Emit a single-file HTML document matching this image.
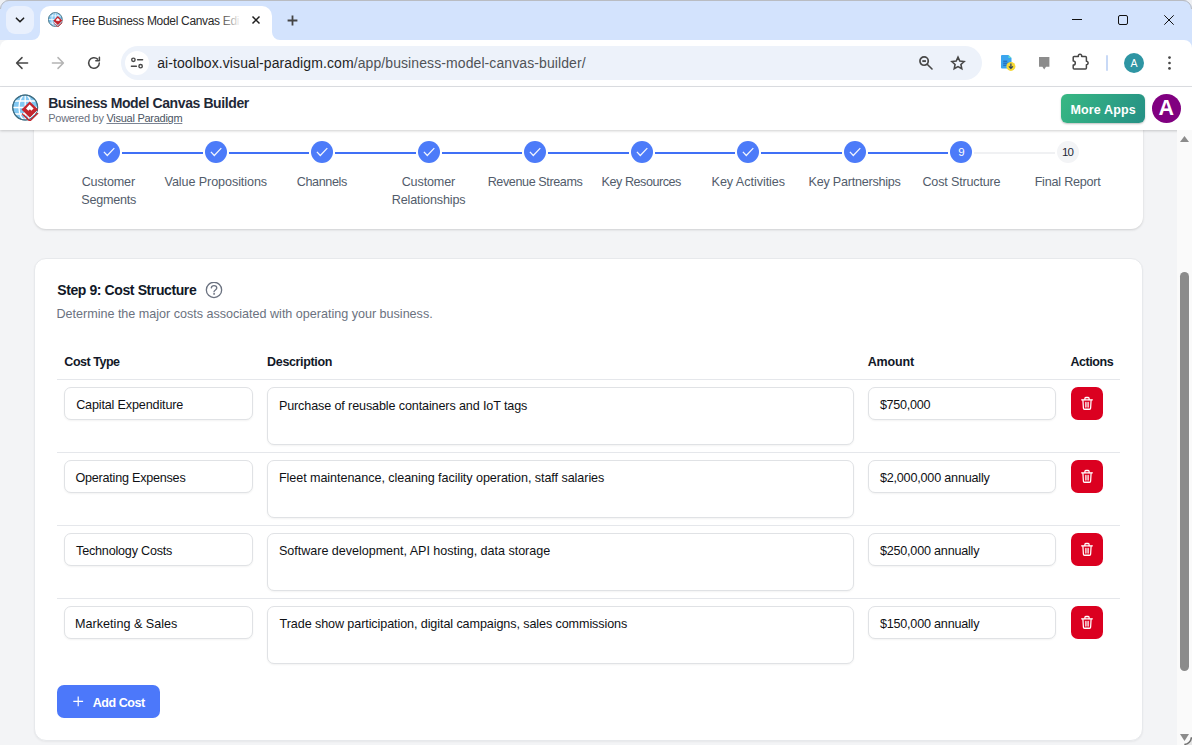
<!DOCTYPE html>
<html lang="en">
<head>
<meta charset="utf-8">
<title>Free Business Model Canvas Editor</title>
<style>
*{box-sizing:border-box;margin:0;padding:0}
html,body{width:1192px;height:745px;overflow:hidden;background:#f3f4f6}
body{font-family:"Liberation Sans",sans-serif;color:#1f2937;position:relative}
.abs{position:absolute}
.t{position:absolute;white-space:nowrap;line-height:1}
/* ---------- browser chrome ---------- */
#tabstrip{left:0;top:0;width:1192px;height:40px;background:#d3e3fd}
#tabdd{left:6px;top:6px;width:28px;height:28px;border-radius:9px;background:#e9f0fd}
#tab{left:40px;top:6px;width:232px;height:34px;background:#fff;border-radius:10px 10px 0 0}
#toolbar{left:0;top:40px;width:1192px;height:46px;background:#fff;border-radius:8px 0 0 0}
#tbline{left:0;top:86px;width:1192px;height:1px;background:#dfe1e5}
#omni{left:121px;top:46px;width:861px;height:34px;border-radius:17px;background:#edf2fa}
#omnichip{left:125px;top:51px;width:24px;height:24px;border-radius:12px;background:#fff}
/* ---------- app ---------- */
#apphead{left:0;top:87px;width:1192px;height:43px;background:#fff;box-shadow:0 1px 3px rgba(0,0,0,.12),0 1px 2px rgba(0,0,0,.08)}
#scroll{left:1177px;top:130px;width:15px;height:615px;background:#fafafa}
.card{background:#fff;border:1px solid #eceef1;box-shadow:0 1px 3px rgba(0,0,0,.07),0 1px 2px rgba(0,0,0,.04)}
#card1{left:34px;top:118px;width:1109px;height:111px;border-radius:12px;border:none;box-shadow:0 1px 3px rgba(0,0,0,.10),0 1px 2px rgba(0,0,0,.06)}
#card2{left:34px;top:258px;width:1109px;height:483px;border-radius:12px;border:1px solid #e7e9ec;box-shadow:0 1px 2px rgba(0,0,0,.05)}
.sc{position:absolute;width:22px;height:22px;border-radius:11px;background:#4c7bf9;top:141px}
.sl{position:absolute;height:2px;background:#4070f6;top:152px;width:80.5px}
.lab{font-size:12.6px;color:#525c6b}
.stn{width:22px;text-align:center;font-size:11.5px;top:146.5px}
.hl{position:absolute;left:57px;width:1063px;height:1px;background:#e5e7eb}
.inp{position:absolute;background:#fff;border:1px solid #e0e2e5;border-radius:7px;box-shadow:0 1px 2px rgba(0,0,0,.05)}
.del{position:absolute;left:1071px;width:32px;height:33px;border-radius:7px;background:#db0020}
.ft{font-size:12.6px;color:#0f1115}
.th{font-size:12.5px;color:#111827;font-weight:bold}
</style>
</head>
<body>
<svg width="0" height="0" style="position:absolute"><defs>
<g id="vplogo">
<clipPath id="gc"><circle cx="13.2" cy="13.5" r="12.2"/></clipPath>
<circle cx="13.2" cy="13.5" r="12.4" fill="#82c8f2" stroke="#3f6e83" stroke-width="1.1"/>
<g clip-path="url(#gc)" stroke="#fff" stroke-width="1.3" fill="none"><path d="M0 13.5h27M2 7h23M2 20h23M13.2 0v27"/><ellipse cx="13.2" cy="13.5" rx="6.2" ry="12.6"/></g>
<circle cx="13.2" cy="13.5" r="12.4" fill="none" stroke="#3f6e83" stroke-width="1.1"/>
<path d="M17.8 7.4l8.3 8.2-8.3 8.2-8.3-8.2z" fill="#c4262e"/>
<path d="M10.2 19.6l7.6 7.4 8.2-8" fill="none" stroke="#c4262e" stroke-width="1.5"/>
<path d="M10.9 20.3l1.4-1.2 5.5 5.2 7-6.9 1 1.2" fill="none" stroke="#fff" stroke-width="0.9"/>
<path d="M17.6 10.6l4 4-2.2 2.2-1.5-1.5-1.5 1.5-2.4-2.4z" fill="#fff"/>
</g></defs></svg>

<!-- browser chrome -->
<div class="abs" id="tabstrip"></div>
<div class="abs" id="tabdd"></div>
<div class="abs" id="tab"></div>
<div class="abs" id="toolbar"></div>
<div class="abs" id="tbline"></div>
<div class="abs" id="omni"></div>
<div class="abs" id="omnichip"></div>

<!-- window frame -->
<div class="abs" style="left:0;top:0;width:1192px;height:1px;background:#b9bcc2"></div>
<svg class="abs" style="left:0;top:0" width="9" height="9"><path d="M0 0h9A9 9 0 0 0 0 9z" fill="#eef0f4"/><path d="M0.5 9A8.5 8.5 0 0 1 9 0.5" fill="none" stroke="#b9bcc2"/></svg>
<svg class="abs" style="left:1183px;top:0" width="9" height="9"><path d="M9 0H0A9 9 0 0 1 9 9z" fill="#eef0f4"/><path d="M8.5 9A8.5 8.5 0 0 0 0 0.5" fill="none" stroke="#b9bcc2"/></svg>
<svg class="abs" style="left:1184px;top:40px" width="8" height="8"><path d="M8 0H0A8 8 0 0 1 8 8z" fill="#d3e3fd"/></svg>
<!-- tab curves -->
<svg class="abs" style="left:32px;top:32px" width="8" height="8"><path d="M8 0v8H0A8 8 0 0 0 8 0z" fill="#fff"/></svg>
<svg class="abs" style="left:272px;top:32px" width="8" height="8"><path d="M0 0v8h8A8 8 0 0 1 0 0z" fill="#fff"/></svg>
<!-- tab dropdown chevron -->
<svg class="abs" style="left:14px;top:14px" width="12" height="12" viewBox="0 0 12 12"><path d="M2.4 4.2 L6 7.8 L9.6 4.2" fill="none" stroke="#1f1f1f" stroke-width="1.6" stroke-linecap="round" stroke-linejoin="round"/></svg>
<!-- favicon -->
<svg class="abs" style="left:48.2px;top:12.2px" width="15" height="15" viewBox="0 0 27 27"><use href="#vplogo"/></svg>
<div class="abs" style="left:218px;top:10px;width:24px;height:22px;z-index:5;background:linear-gradient(90deg,rgba(255,255,255,0),#fff 95%)"></div>
<!-- tab close -->
<svg class="abs" style="left:251px;top:15px" width="10" height="10" viewBox="0 0 10 10"><path d="M1.5 1.5l7 7M8.5 1.5l-7 7" stroke="#1f1f1f" stroke-width="1.5" fill="none" stroke-linecap="butt"/></svg>
<!-- new tab -->
<svg class="abs" style="left:286.5px;top:14.5px" width="11" height="11" viewBox="0 0 11 11"><path d="M5.5 0.6v9.8M0.6 5.5h9.8" stroke="#444" stroke-width="1.8" fill="none" stroke-linecap="butt"/></svg>
<!-- window controls -->
<div class="abs" style="left:1072px;top:19px;width:10px;height:1px;background:#111"></div>
<div class="abs" style="left:1118px;top:15px;width:10px;height:10px;border:1px solid #111;border-radius:2px"></div>
<svg class="abs" style="left:1164px;top:15px" width="10" height="10" viewBox="0 0 10 10"><path d="M0.3 0.3l9.4 9.4M9.7 0.3l-9.4 9.4" stroke="#111" stroke-width="1" fill="none"/></svg>
<!-- nav buttons -->
<svg class="abs" style="left:15px;top:56px" width="14" height="14" viewBox="0 0 14 14"><path d="M12.6 7H2M7 1.6L1.6 7 7 12.4" fill="none" stroke="#474747" stroke-width="1.5" stroke-linecap="round" stroke-linejoin="round"/></svg>
<svg class="abs" style="left:51px;top:56px" width="14" height="14" viewBox="0 0 14 14"><path d="M1.4 7H12M7 1.6L12.4 7 7 12.4" fill="none" stroke="#b4b4b4" stroke-width="1.5" stroke-linecap="round" stroke-linejoin="round"/></svg>
<svg class="abs" style="left:86px;top:55px" width="16" height="16" viewBox="0 0 16 16"><path d="M13.3 8a5.3 5.3 0 1 1-1.7-3.9" fill="none" stroke="#474747" stroke-width="1.5" stroke-linecap="round"/><path d="M13.4 2.2v3.6H9.8" fill="none" stroke="#474747" stroke-width="1.5" stroke-linecap="round" stroke-linejoin="round"/></svg>
<!-- site info (tune) -->
<svg class="abs" style="left:130px;top:56px" width="14" height="14" viewBox="0 0 14 14" fill="none" stroke="#474747" stroke-width="1.4" stroke-linecap="round"><circle cx="3.4" cy="3.8" r="1.7"/><path d="M7.6 3.8h5"/><circle cx="10.6" cy="10.2" r="1.7"/><path d="M1.4 10.2h5"/></svg>
<!-- zoom -->
<svg class="abs" style="left:918px;top:55px" width="16" height="16" viewBox="0 0 16 16" fill="none" stroke="#474747" stroke-width="1.7" stroke-linecap="butt"><circle cx="6.1" cy="6.1" r="4.15"/><path d="M9.2 9.2l4.8 4.8" stroke-linecap="round" stroke-width="1.6"/><path d="M4.3 6.1h3.6" stroke-width="1.9"/></svg>
<!-- star -->
<svg class="abs" style="left:949px;top:54px" width="18" height="18" viewBox="0 0 18 18"><path d="M9 2.6l2 4.4 4.8.55-3.55 3.25.95 4.75L9 13.15l-4.2 2.4.95-4.75L2.2 7.55 7 7z" fill="none" stroke="#474747" stroke-width="1.75" stroke-linejoin="miter" transform="translate(9 9.3) scale(.9) translate(-9 -9.5)"/></svg>
<!-- ext: doc download -->
<svg class="abs" style="left:1000px;top:54px" width="17" height="18" viewBox="0 0 17 18"><path d="M2 1h6.5l3 3v10.6H2a1 1 0 0 1-1-1V2a1 1 0 0 1 1-1z" fill="#3ba5ee"/><path d="M8.5 1l3 3h-3z" fill="#5fe0cf"/><path d="M3.2 7.2h4M3.2 9.2h5.4M3.2 11.2h3.5" stroke="#1f5fae" stroke-width="1"/><circle cx="10.9" cy="12.4" r="4.5" fill="#f6d834"/><path d="M10.9 9.6v4.6M8.9 12.4l2 2 2-2" fill="none" stroke="#2a3f5f" stroke-width="1.2"/></svg>
<!-- ext: gray bubble -->
<svg class="abs" style="left:1038px;top:56px" width="13" height="15" viewBox="0 0 13 15"><path d="M1 1h10.4v9.8H8L6.2 13.6 4.4 10.8H1z" fill="#8c8c8c"/></svg>
<!-- ext: puzzle -->
<svg class="abs" style="left:1072px;top:53px" width="18" height="18" viewBox="0 0 18 18"><path d="M2.2 3.4H6.4A1.7 1.7 0 1 1 9.6 3.4H13.4A1 1 0 0 1 14.4 4.4V8.3A1.7 1.7 0 1 1 14.4 11.7V15A1 1 0 0 1 13.4 16H2.2A1 1 0 0 1 1.2 15V12.1A2.1 2.1 0 0 0 1.2 7.9V4.4A1 1 0 0 1 2.2 3.4Z" fill="none" stroke="#474747" stroke-width="1.5" stroke-linejoin="round"/></svg>
<!-- separator -->
<div class="abs" style="left:1106px;top:55px;width:2px;height:16px;background:#c8d9f6;border-radius:1px"></div>
<!-- profile -->
<div class="abs" style="left:1124px;top:53px;width:20px;height:20px;border-radius:10px;background:#2e95a3"></div>
<div class="t" style="left:1124px;top:58px;width:20px;text-align:center;font-size:10.5px;color:#fff">A</div>
<!-- menu -->
<svg class="abs" style="left:1167px;top:55px" width="5" height="16" viewBox="0 0 5 16"><circle cx="2.5" cy="2.6" r="1.35" fill="#474747"/><circle cx="2.5" cy="8" r="1.35" fill="#474747"/><circle cx="2.5" cy="13.4" r="1.35" fill="#474747"/></svg>
<!-- page -->
<div class="abs card" id="card1"></div>
<div class="abs card" id="card2"></div>
<div class="abs" id="apphead"></div>
<div class="abs" id="scroll"></div>

<div class="abs" id="moreapps" style="left:1061px;top:94px;width:84px;height:29px;border-radius:6px;background:linear-gradient(120deg,#38b883,#259085);box-shadow:0 1px 2px rgba(0,0,0,.25)"></div>
<div class="abs" id="avatar" style="left:1152px;top:94px;width:29px;height:29px;border-radius:15px;background:#800080"></div>
<svg class="abs" style="left:12px;top:94px" width="27" height="27" viewBox="0 0 27 27"><use href="#vplogo"/></svg>
<svg class="abs" style="left:205px;top:282px" width="18" height="18" viewBox="0 0 18 18" fill="none" stroke="#6b7280" stroke-width="1.3" stroke-linecap="round"><circle cx="9" cy="7.9" r="7.65"/><path d="M6.3 5.9C6.5 4.4 7.6 3.7 9 3.7C10.6 3.7 11.8 4.7 11.8 6.1C11.8 7.9 9 8 9 9.8"/><circle cx="9" cy="11.9" r=".55" fill="#6b7280" stroke-width=".6"/></svg>
<svg class="abs" style="left:1179px;top:135px" width="11" height="8" viewBox="0 0 11 8"><path d="M5.5 1L10 7H1z" fill="#8b8b8b"/></svg>
<svg class="abs" style="left:1179px;top:733px" width="11" height="9" viewBox="0 0 11 9"><path d="M5.5 8L10 1H1z" fill="#8b8b8b"/></svg>
<svg class="abs" style="left:1184px;top:737px" width="8" height="8"><path d="M8 0V8H0A8 8 0 0 0 8 0z" fill="#e4e4e4"/><path d="M0.3 7.4A7.4 7.4 0 0 0 7.4 0.3" fill="none" stroke="#707070" stroke-width="1.5"/></svg>
<div class="abs" style="left:1180px;top:272px;width:9px;height:399px;border-radius:5px;background:#8b8b8b"></div>
<div class="sl" style="left:122.0px"></div>
<div class="sc" style="left:98.0px"></div>
<svg class="abs" style="left:103.0px;top:146px" width="12" height="12" viewBox="0 0 12 12"><path d="M0.9 5.9 L4.3 9.5 L11.3 2.1" fill="none" stroke="#fff" stroke-opacity=".92" stroke-width="1.3" stroke-linejoin="miter"/></svg>
<div id="lab0_0" class="t lab" style="left:81.68px;top:176.0px;letter-spacing:-0.167px;">Customer</div>
<div id="lab0_1" class="t lab" style="left:81.37px;top:193.5px;letter-spacing:-0.265px;">Segments</div>
<div class="sl" style="left:228.6px"></div>
<div class="sc" style="left:204.6px"></div>
<svg class="abs" style="left:209.6px;top:146px" width="12" height="12" viewBox="0 0 12 12"><path d="M0.9 5.9 L4.3 9.5 L11.3 2.1" fill="none" stroke="#fff" stroke-opacity=".92" stroke-width="1.3" stroke-linejoin="miter"/></svg>
<div id="lab1_0" class="t lab" style="left:164.51px;top:176.0px;letter-spacing:-0.087px;">Value Propositions</div>
<div class="sl" style="left:335.1px"></div>
<div class="sc" style="left:311.1px"></div>
<svg class="abs" style="left:316.1px;top:146px" width="12" height="12" viewBox="0 0 12 12"><path d="M0.9 5.9 L4.3 9.5 L11.3 2.1" fill="none" stroke="#fff" stroke-opacity=".92" stroke-width="1.3" stroke-linejoin="miter"/></svg>
<div id="lab2_0" class="t lab" style="left:296.68px;top:176.0px;letter-spacing:-0.381px;">Channels</div>
<div class="sl" style="left:441.6px"></div>
<div class="sc" style="left:417.6px"></div>
<svg class="abs" style="left:422.6px;top:146px" width="12" height="12" viewBox="0 0 12 12"><path d="M0.9 5.9 L4.3 9.5 L11.3 2.1" fill="none" stroke="#fff" stroke-opacity=".92" stroke-width="1.3" stroke-linejoin="miter"/></svg>
<div id="lab3_0" class="t lab" style="left:401.66px;top:176.0px;letter-spacing:-0.141px;">Customer</div>
<div id="lab3_1" class="t lab" style="left:391.78px;top:193.5px;letter-spacing:-0.150px;">Relationships</div>
<div class="sl" style="left:548.2px"></div>
<div class="sc" style="left:524.2px"></div>
<svg class="abs" style="left:529.2px;top:146px" width="12" height="12" viewBox="0 0 12 12"><path d="M0.9 5.9 L4.3 9.5 L11.3 2.1" fill="none" stroke="#fff" stroke-opacity=".92" stroke-width="1.3" stroke-linejoin="miter"/></svg>
<div id="lab4_0" class="t lab" style="left:487.65px;top:176.0px;letter-spacing:-0.402px;">Revenue Streams</div>
<div class="sl" style="left:654.8px"></div>
<div class="sc" style="left:630.8px"></div>
<svg class="abs" style="left:635.8px;top:146px" width="12" height="12" viewBox="0 0 12 12"><path d="M0.9 5.9 L4.3 9.5 L11.3 2.1" fill="none" stroke="#fff" stroke-opacity=".92" stroke-width="1.3" stroke-linejoin="miter"/></svg>
<div id="lab5_0" class="t lab" style="left:601.59px;top:176.0px;letter-spacing:-0.469px;">Key Resources</div>
<div class="sl" style="left:761.3px"></div>
<div class="sc" style="left:737.3px"></div>
<svg class="abs" style="left:742.3px;top:146px" width="12" height="12" viewBox="0 0 12 12"><path d="M0.9 5.9 L4.3 9.5 L11.3 2.1" fill="none" stroke="#fff" stroke-opacity=".92" stroke-width="1.3" stroke-linejoin="miter"/></svg>
<div id="lab6_0" class="t lab" style="left:711.59px;top:176.0px;letter-spacing:-0.054px;">Key Activities</div>
<div class="sl" style="left:867.9px"></div>
<div class="sc" style="left:843.9px"></div>
<svg class="abs" style="left:848.9px;top:146px" width="12" height="12" viewBox="0 0 12 12"><path d="M0.9 5.9 L4.3 9.5 L11.3 2.1" fill="none" stroke="#fff" stroke-opacity=".92" stroke-width="1.3" stroke-linejoin="miter"/></svg>
<div id="lab7_0" class="t lab" style="left:808.59px;top:176.0px;letter-spacing:-0.240px;">Key Partnerships</div>
<div class="sl" style="left:974.4px;background:#f0f1f3"></div>
<div class="sc" style="left:950.4px"></div>
<div class="t stn" style="left:950.4px;color:#fff">9</div>
<div id="lab8_0" class="t lab" style="left:922.42px;top:176.0px;letter-spacing:-0.178px;">Cost Structure</div>
<div class="sc" style="left:1056.9px;background:#f3f4f6"></div>
<div class="t stn" style="left:1056.6px;color:#1f2937;letter-spacing:-0.7px">10</div>
<div id="lab9_0" class="t lab" style="left:1034.65px;top:176.0px;letter-spacing:-0.218px;">Final Report</div>

<div class="hl" style="top:379px"></div>
<div class="inp" style="left:64px;top:387px;width:189px;height:33px"></div>
<div id="r0a" class="t ft" style="left:76.14px;top:399px;letter-spacing:-0.151px;">Capital Expenditure</div>
<div class="inp" style="left:267px;top:387px;width:587px;height:58px"></div>
<div id="r0b" class="t ft" style="left:278.90px;top:400px;letter-spacing:-0.127px;">Purchase of reusable containers and IoT tags</div>
<div class="inp" style="left:868px;top:387px;width:188px;height:33px"></div>
<div id="r0c" class="t ft" style="left:879.89px;top:399px;letter-spacing:-0.265px;">$750,000</div>
<div class="del" style="top:387px"></div>
<svg class="abs" style="left:1080px;top:396px" width="14" height="15" viewBox="0 0 14 14" preserveAspectRatio="none" fill="none" stroke="#fff" stroke-width="1.25" stroke-linecap="round" stroke-linejoin="round"><path d="M1.6 3.6h10.8"/><path d="M4.9 3.4V2.3c0-.5.4-.9.9-.9h2.4c.5 0 .9.4.9.9v1.1"/><path d="M2.9 3.8l.5 7.6c0 .6.5 1 1.1 1h5c.6 0 1.1-.4 1.1-1l.5-7.6"/><path d="M5.9 6v4.2M8.1 6v4.2" stroke-width="1.3"/></svg>
<div class="hl" style="top:452px"></div>
<div class="inp" style="left:64px;top:460px;width:189px;height:33px"></div>
<div id="r1a" class="t ft" style="left:75.44px;top:472px;letter-spacing:-0.228px;">Operating Expenses</div>
<div class="inp" style="left:267px;top:460px;width:587px;height:58px"></div>
<div id="r1b" class="t ft" style="left:278.90px;top:472px;letter-spacing:-0.066px;">Fleet maintenance, cleaning facility operation, staff salaries</div>
<div class="inp" style="left:868px;top:460px;width:188px;height:33px"></div>
<div id="r1c" class="t ft" style="left:879.89px;top:472px;letter-spacing:-0.193px;">$2,000,000 annually</div>
<div class="del" style="top:460px"></div>
<svg class="abs" style="left:1080px;top:469px" width="14" height="15" viewBox="0 0 14 14" preserveAspectRatio="none" fill="none" stroke="#fff" stroke-width="1.25" stroke-linecap="round" stroke-linejoin="round"><path d="M1.6 3.6h10.8"/><path d="M4.9 3.4V2.3c0-.5.4-.9.9-.9h2.4c.5 0 .9.4.9.9v1.1"/><path d="M2.9 3.8l.5 7.6c0 .6.5 1 1.1 1h5c.6 0 1.1-.4 1.1-1l.5-7.6"/><path d="M5.9 6v4.2M8.1 6v4.2" stroke-width="1.3"/></svg>
<div class="hl" style="top:525px"></div>
<div class="inp" style="left:64px;top:533px;width:189px;height:33px"></div>
<div id="r2a" class="t ft" style="left:76.09px;top:545px;letter-spacing:-0.205px;">Technology Costs</div>
<div class="inp" style="left:267px;top:533px;width:587px;height:58px"></div>
<div id="r2b" class="t ft" style="left:278.99px;top:545px;letter-spacing:-0.040px;">Software development, API hosting, data storage</div>
<div class="inp" style="left:868px;top:533px;width:188px;height:33px"></div>
<div id="r2c" class="t ft" style="left:879.89px;top:545px;letter-spacing:-0.207px;">$250,000 annually</div>
<div class="del" style="top:533px"></div>
<svg class="abs" style="left:1080px;top:542px" width="14" height="15" viewBox="0 0 14 14" preserveAspectRatio="none" fill="none" stroke="#fff" stroke-width="1.25" stroke-linecap="round" stroke-linejoin="round"><path d="M1.6 3.6h10.8"/><path d="M4.9 3.4V2.3c0-.5.4-.9.9-.9h2.4c.5 0 .9.4.9.9v1.1"/><path d="M2.9 3.8l.5 7.6c0 .6.5 1 1.1 1h5c.6 0 1.1-.4 1.1-1l.5-7.6"/><path d="M5.9 6v4.2M8.1 6v4.2" stroke-width="1.3"/></svg>
<div class="hl" style="top:598px"></div>
<div class="inp" style="left:64px;top:606px;width:189px;height:33px"></div>
<div id="r3a" class="t ft" style="left:75.05px;top:618px;letter-spacing:0.009px;">Marketing &amp; Sales</div>
<div class="inp" style="left:267px;top:606px;width:587px;height:58px"></div>
<div id="r3b" class="t ft" style="left:279.62px;top:618px;letter-spacing:-0.099px;">Trade show participation, digital campaigns, sales commissions</div>
<div class="inp" style="left:868px;top:606px;width:188px;height:33px"></div>
<div id="r3c" class="t ft" style="left:879.89px;top:618px;letter-spacing:-0.207px;">$150,000 annually</div>
<div class="del" style="top:606px"></div>
<svg class="abs" style="left:1080px;top:615px" width="14" height="15" viewBox="0 0 14 14" preserveAspectRatio="none" fill="none" stroke="#fff" stroke-width="1.25" stroke-linecap="round" stroke-linejoin="round"><path d="M1.6 3.6h10.8"/><path d="M4.9 3.4V2.3c0-.5.4-.9.9-.9h2.4c.5 0 .9.4.9.9v1.1"/><path d="M2.9 3.8l.5 7.6c0 .6.5 1 1.1 1h5c.6 0 1.1-.4 1.1-1l.5-7.6"/><path d="M5.9 6v4.2M8.1 6v4.2" stroke-width="1.3"/></svg>

<div class="abs" id="addbtn" style="left:57px;top:685px;width:103px;height:33px;border-radius:7px;background:#4c78fa"></div>
<svg class="abs" style="left:72px;top:695px" width="12" height="12" viewBox="0 0 12 12"><path d="M6.2 1.4v9.8M1.3 6.3h9.8" stroke="#fff" stroke-width="1.2" fill="none"/></svg>
<div id="tabtitle" class="t" style="left:71.41px;top:15px;letter-spacing:-0.321px;font-size:12px;color:#2a2a2a">Free Business Model Canvas Edi</div>
<div id="url" class="t" style="left:157.15px;top:56px;letter-spacing:0.092px;font-size:14px;color:#1f1f1f">ai-toolbox.visual-paradigm.com<span style="color:#505357">/app/business-model-canvas-builder/</span></div>
<div id="apptitle" class="t" style="left:48.13px;top:96px;letter-spacing:-0.404px;font-size:14px;font-weight:bold;color:#1f2937">Business Model Canvas Builder</div>
<div id="appsub" class="t" style="left:48.22px;top:113px;letter-spacing:-0.266px;font-size:11px;color:#6b7280">Powered by <span style="color:#4b5563;text-decoration:underline;text-decoration-thickness:1px;text-underline-offset:0.5px;text-decoration-color:#7b8494">Visual Paradigm</span></div>
<div id="moretxt" class="t" style="left:1070.52px;top:104px;letter-spacing:0.147px;font-size:12.5px;font-weight:bold;color:#fff">More Apps</div>
<div id="avatxt" class="t" style="left:1158.60px;top:97.5px;letter-spacing:0.000px;font-size:21.5px;font-weight:bold;color:#fff">A</div>
<div id="h1" class="t" style="left:57.24px;top:283px;letter-spacing:-0.398px;font-size:14px;font-weight:bold;color:#111827">Step 9: Cost Structure</div>
<div id="h2" class="t" style="left:56.48px;top:308px;letter-spacing:-0.017px;font-size:12.6px;color:#6b7280">Determine the major costs associated with operating your business.</div>
<div id="th1" class="t th" style="left:64.35px;top:355.5px;letter-spacing:-0.473px;">Cost Type</div>
<div id="th2" class="t th" style="left:267.12px;top:355.5px;letter-spacing:-0.349px;">Description</div>
<div id="th3" class="t th" style="left:867.63px;top:355.5px;letter-spacing:-0.125px;">Amount</div>
<div id="th4" class="t th" style="left:1070.53px;top:355.5px;letter-spacing:-0.444px;">Actions</div>
<div id="addtxt" class="t" style="left:92.77px;top:696.5px;letter-spacing:-0.448px;font-size:12.5px;font-weight:bold;color:#fff">Add Cost</div>
</body>
</html>
